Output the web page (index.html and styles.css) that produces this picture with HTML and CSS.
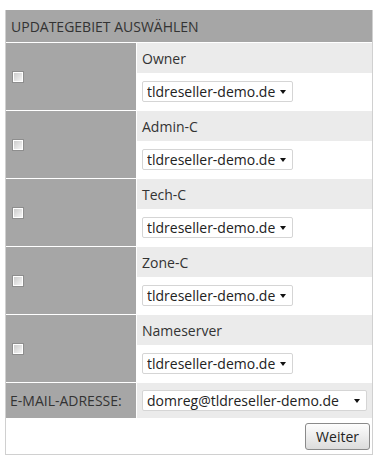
FILE: index.html
```html
<!DOCTYPE html>
<html lang="de">
<head>
    <meta charset="UTF-8">
    <title>Updategebiet auswählen</title>
    <link rel="stylesheet" href="styles.css">
</head>
<body>

    <form class="update-box">
        <table class="update-table">
            <thead>
                <tr>
                    <th colspan="2">Updategebiet auswählen</th>
                </tr>
            </thead>
            <tbody>
                <tr class="row-top">
                    <td class="check-cell" rowspan="2"><input type="checkbox" name="owner"></td>
                    <td class="label-cell">Owner</td>
                </tr>
                <tr>
                    <td class="select-cell">
                        <span class="select-wrap"><select><option>tldreseller-demo.de</option></select></span>
                    </td>
                </tr>

                <tr class="row-top">
                    <td class="check-cell" rowspan="2"><input type="checkbox" name="admin"></td>
                    <td class="label-cell">Admin-C</td>
                </tr>
                <tr>
                    <td class="select-cell">
                        <span class="select-wrap"><select><option>tldreseller-demo.de</option></select></span>
                    </td>
                </tr>

                <tr class="row-top">
                    <td class="check-cell" rowspan="2"><input type="checkbox" name="tech"></td>
                    <td class="label-cell">Tech-C</td>
                </tr>
                <tr>
                    <td class="select-cell">
                        <span class="select-wrap"><select><option>tldreseller-demo.de</option></select></span>
                    </td>
                </tr>

                <tr class="row-top">
                    <td class="check-cell" rowspan="2"><input type="checkbox" name="zone"></td>
                    <td class="label-cell">Zone-C</td>
                </tr>
                <tr>
                    <td class="select-cell">
                        <span class="select-wrap"><select><option>tldreseller-demo.de</option></select></span>
                    </td>
                </tr>

                <tr class="row-top">
                    <td class="check-cell" rowspan="2"><input type="checkbox" name="ns"></td>
                    <td class="label-cell">Nameserver</td>
                </tr>
                <tr>
                    <td class="select-cell">
                        <span class="select-wrap"><select><option>tldreseller-demo.de</option></select></span>
                    </td>
                </tr>

                <!-- E-Mail -->
                <tr class="row-top">
                    <td class="mail-label">E-Mail-Adresse:</td>
                    <td class="mail-cell">
                        <span class="select-wrap wide"><select><option>domreg@tldreseller-demo.de</option></select></span>
                    </td>
                </tr>
                <tr>
                    <td class="button-cell" colspan="2">
                        <button type="submit">Weiter</button>
                    </td>
                </tr>
            </tbody>
        </table>
    </form>

</body>
</html>
```

FILE: styles.css
```css
body {
    margin: 0;
    padding: 10px 5px 0 5px;
    font-family: "Open Sans", Arial, sans-serif;
    font-size: 14px;
    color: #333;
    background-color: #fff;
}
.update-box {
    width: 366px;
    border: 1px solid #d0d0d0;
    border-top: none;
}
.update-table {
    width: 100%;
    border-collapse: collapse;
}
.update-table th {
    background-color: #a6a6a6;
    height: 32px;
    padding: 0 0 0 5px;
    text-align: left;
    font-weight: normal;
    text-transform: uppercase;
    color: #333;
}
.update-table td {
    padding: 0;
}
.row-top td {
    border-top: 1px solid #fff;
}
.check-cell {
    width: 124px;
    background-color: #a6a6a6;
    border-right: 1px solid #fff;
    padding-left: 6px !important;
    vertical-align: middle;
}
.check-cell input {
    appearance: none;
    -webkit-appearance: none;
    display: block;
    width: 12px;
    height: 12px;
    margin: 0;
    border: 1px solid #8e8e8e;
    box-shadow: inset 0 0 0 1px #fff;
    background: linear-gradient(135deg, #c8c8c8, #fafafa);
}
.label-cell {
    height: 30px;
    background-color: #ebebeb;
    padding-left: 5px !important;
}
.select-cell {
    height: 37px;
    padding-left: 5px !important;
}
.select-wrap {
    position: relative;
    display: inline-block;
}
.select-wrap::after {
    content: "";
    position: absolute;
    right: 7px;
    top: 9px;
    border-left: 3px solid transparent;
    border-right: 3px solid transparent;
    border-top: 4px solid #111;
    pointer-events: none;
}
.select-wrap select {
    appearance: none;
    -webkit-appearance: none;
    width: 151px;
    height: 21px;
    margin: 0;
    padding: 0 16px 0 4px;
    border: 1px solid #d5d5d5;
    border-radius: 2px;
    background-color: #fff;
    font-family: "Open Sans", Arial, sans-serif;
    font-size: 14px;
    color: #222;
}
.select-wrap.wide select {
    width: 225px;
}
.mail-label {
    height: 35px;
    background-color: #a6a6a6;
    border-right: 1px solid #fff;
    padding-left: 4px !important;
    text-transform: uppercase;
    color: #333;
}
.mail-cell {
    background-color: #ebebeb;
    padding-left: 5px !important;
}
.button-cell {
    height: 36px;
    text-align: right;
    padding-right: 2px !important;
}
.button-cell button {
    height: 27px;
    padding: 0 10px;
    font-family: "Open Sans", Arial, sans-serif;
    font-size: 14px;
    color: #222;
    border: 1px solid #8a8a8a;
    border-radius: 3px;
    background: linear-gradient(#fdfdfd, #dcdcdc);
    cursor: pointer;
}
```
